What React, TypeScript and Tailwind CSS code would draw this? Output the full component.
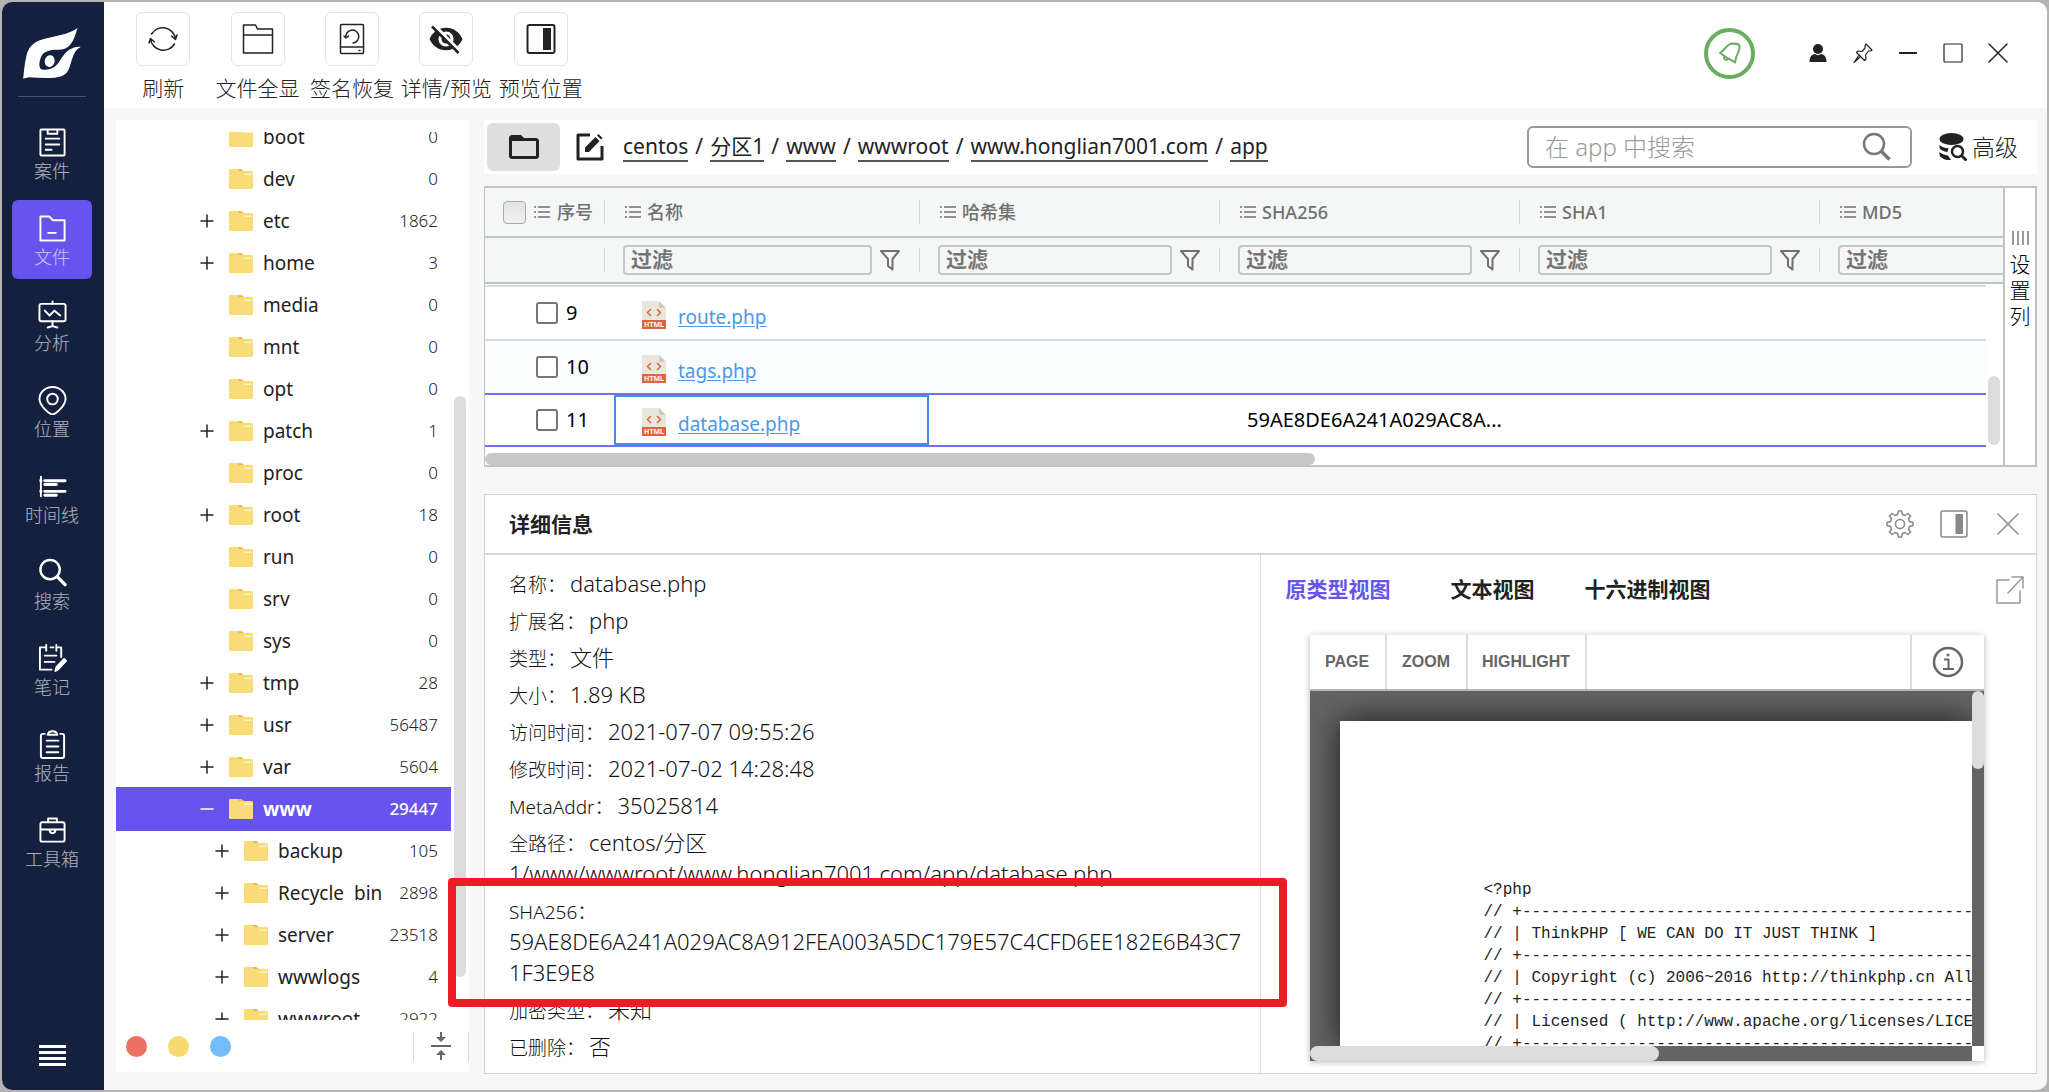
import type { ReactNode } from "react";
import { MdFolderOpen, MdVisibilityOff } from "react-icons/md";

const treeRows = [
  { name: "boot", count: 0 },
  { name: "dev", count: 0 },
  { name: "etc", count: 1862, toggle: "+" },
  { name: "home", count: 3, toggle: "+" },
  { name: "media", count: 0 },
  { name: "mnt", count: 0 },
  { name: "opt", count: 0 },
  { name: "patch", count: 1, toggle: "+" },
  { name: "proc", count: 0 },
  { name: "root", count: 18, toggle: "+" },
  { name: "run", count: 0 },
  { name: "srv", count: 0 },
  { name: "sys", count: 0 },
  { name: "tmp", count: 28, toggle: "+" },
  { name: "usr", count: 56487, toggle: "+" },
  { name: "var", count: 5604, toggle: "+" },
  { name: "www", count: 29447, toggle: "-", active: true },
  { name: "backup", count: 105, toggle: "+", nested: true },
  { name: "Recycle\u00a0 bin", count: 2898, toggle: "+", nested: true },
  { name: "server", count: 23518, toggle: "+", nested: true },
  { name: "wwwlogs", count: 4, toggle: "+", nested: true },
  { name: "wwwroot", count: 2922, toggle: "+", nested: true },
];

const crumbs = ["centos", "分区1", "www", "wwwroot", "www.honglian7001.com", "app"];

const columns = ["名称", "哈希集", "SHA256", "SHA1", "MD5"];

const files = [
  { id: 9, name: "route.php", sha256: "" },
  { id: 10, name: "tags.php", sha256: "" },
  { id: 11, name: "database.php", sha256: "59AE8DE6A241A029AC8A...", selected: true },
];

const details = [
  { label: "名称", value: "database.php" },
  { label: "扩展名", value: "php" },
  { label: "类型", value: "文件" },
  { label: "大小", value: "1.89 KB" },
  { label: "访问时间", value: "2021-07-07 09:55:26" },
  { label: "修改时间", value: "2021-07-02 14:28:48" },
  { label: "MetaAddr", value: "35025814" },
  { label: "全路径", value: "centos/分区\n1/www/wwwroot/www.honglian7001.com/app/database.php" },
  {
    label: "SHA256",
    value: "\n59AE8DE6A241A029AC8A912FEA003A5DC179E57C4CFD6EE182E6B43C7\n1F3E9E8",
    marked: true,
  },
  { label: "加密类型", value: "未知" },
  { label: "已删除", value: "否" },
];

const dashes = "// +" + "-".repeat(70);
const code = [
  "<?php",
  dashes,
  "// | ThinkPHP [ WE CAN DO IT JUST THINK ]",
  dashes,
  "// | Copyright (c) 2006~2016 http://thinkphp.cn All rights reserved.",
  dashes,
  "// | Licensed ( http://www.apache.org/licenses/LICENSE-2.0 )",
  dashes,
].join("\n");

type IconProps = { className?: string; children: ReactNode; box?: string };

const Icon = ({ className, children, box = "0 0 30 30" }: IconProps) => (
  <svg
    viewBox={box}
    className={className}
    fill="none"
    stroke="currentColor"
    strokeWidth={2}
    strokeLinecap="round"
    strokeLinejoin="round"
    aria-hidden="true"
  >
    {children}
  </svg>
);

const navItems = [
  {
    label: "案件",
    icon: (
      <>
        <rect x="2.5" y="1.5" width="25" height="27" rx="1" />
        <path d="M10 2v4h10V2M8 11h14M8 17h14M8 22.5h6" />
      </>
    ),
  },
  {
    label: "文件",
    active: true,
    icon: <path d="M2.5 2.5h9l4 4h12v21h-25zM10.500 19.500h8" />,
  },
  {
    label: "分析",
    icon: (
      <>
        <rect x="1.500" y="4" width="27" height="18" rx="2" />
        <path d="M15 1.500V4M15 22v5M10 28.500l5-1.500 5 1.500M7 11l5 5 5-5 6 5" />
      </>
    ),
  },
  {
    label: "位置",
    icon: (
      <>
        <path d="M15 29.500C11 29 1.500 20 1.500 13.500a13.500 12.500 0 0 1 27 0C28.500 20 19 29 15 29.500z" />
        <circle cx="15" cy="13.500" r="5.500" />
      </>
    ),
  },
  {
    label: "时间线",
    icon: (
      <>
        <path d="M3 5v20" />
        <path strokeWidth="3" d="M3 8.500v1M3 19.500v1M7 9h21M7 13h12M7 20h21M7 24h12" />
      </>
    ),
  },
  {
    label: "搜索",
    icon: (
      <>
        <circle cx="12.500" cy="12" r="10" strokeWidth="2.500" />
        <path d="M20 19.500l8 8" strokeWidth="3.500" />
      </>
    ),
  },
  {
    label: "笔记",
    icon: (
      <>
        <path d="M7 3.500H2v23h12M13 3.500h3M21 3.500h3v10M8.500 1v6M19 1v6M7 12h12M7 18.500h10" />
        <path d="M18 28l1-4 8-8.500 2 2-8 8.500z" fill="currentColor" />
      </>
    ),
  },
  {
    label: "报告",
    icon: (
      <>
        <path d="M7 4H5a2 2 0 0 0-2 2v21a2 2 0 0 0 2 2h20a2 2 0 0 0 2-2V6a2 2 0 0 0-2-2h-2" />
        <path d="M10 5c1-5 9-5 10 0zM9 11h12M9 17h12M9 23h12" />
      </>
    ),
  },
  {
    label: "工具箱",
    icon: (
      <>
        <rect x="2.500" y="6.500" width="25" height="20" rx="2" />
        <path d="M10.500 6V2.500h9V6M3 14h24M12 14c0 5 6 5 6 0" />
      </>
    ),
  },
];

const toolItems = [
  {
    label: "刷新",
    icon: (
      <Icon className="size-8" box="0 0 32 32">
        <path
          strokeWidth="1.500"
          d="M4.500 11a13 13 0 0 1 24 5M27.500 21a13 13 0 0 1-24-5M24.500 13l4 3.500 1.500-4.500M7.500 19l-4-3.500L2 20"
        />
      </Icon>
    ),
  },
  {
    label: "文件全显",
    icon: (
      <Icon className="size-8" box="0 0 32 32">
        <path strokeWidth="1.500" d="M1.500 2h12l2 4h15v24h-29zM1.500 12h29" />
      </Icon>
    ),
  },
  {
    label: "签名恢复",
    icon: (
      <Icon className="size-8" box="0 0 32 32">
        <rect x="4.500" y="1.500" width="23" height="29" rx="1" strokeWidth="1.500" />
        <path strokeWidth="1.500" d="M4.500 24h23M23 27.500h1M8 13l2 2 2.500-2M10 15a6.500 6.500 0 1 1 7 5" />
      </Icon>
    ),
  },
  { label: "详情/预览", icon: <MdVisibilityOff className="size-9" /> },
  {
    label: "预览位置",
    icon: (
      <Icon className="size-8" box="0 0 32 32">
        <rect x="2.500" y="2" width="27" height="28" rx="2" />
        <path d="M18 5h8v22h-8z" fill="currentColor" stroke="none" />
      </Icon>
    ),
  },
];

const FolderIcon = () => (
  <svg viewBox="0 0 24 20" className="h-5 w-6 shrink-0" aria-hidden="true">
    <path d="M1 0h11l3 2h8a1 1 0 0 1 1 1v16a1 1 0 0 1-1 1H1a1 1 0 0 1-1-1V1a1 1 0 0 1 1-1z" fill="#f9db78" />
    <path d="M9 0h3l3 2h-5z" fill="#efb45a" />
    <path d="M15 4.500h8v1.500h-8z" fill="#fff3c9" />
  </svg>
);

const HtmlIcon = () => (
  <svg viewBox="0 0 24 28" className="h-7 w-6 shrink-0" aria-hidden="true">
    <path d="M0 0h17l7 7v21H0z" fill="#e9e7dc" />
    <path d="M17 0l7 7h-7z" fill="#cfccbd" />
    <path d="M9 8l-3.500 3.500L9 15M15 8l3.500 3.500L15 15" fill="none" stroke="#e0673a" strokeWidth="1.500" />
    <path d="M0 19h24v9H0z" fill="#e0623a" />
    <text x="12" y="26" textAnchor="middle" fontSize="7" fontWeight="700" fill="#fff">
      HTML
    </text>
  </svg>
);

const ListIcon = () => (
  <Icon className="h-4 w-4 shrink-0" box="0 0 16 16">
    <path strokeWidth="1.500" strokeLinecap="butt" d="M0 3h2M4 3h12M0 8h2M4 8h12M0 13h2M4 13h12" />
  </Icon>
);

const FunnelIcon = () => (
  <Icon className="h-[22px] w-5 shrink-0" box="0 0 20 22">
    <path d="M1 2h18l-6.500 8v10.500L8 17v-7z" />
  </Icon>
);

const Sidebar = () => (
  <nav className="flex w-[102px] shrink-0 flex-col items-center bg-[#15203f] pl-[10px] pr-3">
    <svg viewBox="60 42 174 154" className="mt-[26px] h-[51px] w-[58px]" fill="#fff" aria-hidden="true">
      <path d="M224 42C200 62 150 66 110 79C86 88 75 105 70 125C64 150 62 175 60 195L76 191C120 194 168 197 188 180C208 164 203 112 234 99C208 97 192 112 182 124C166 144 162 168 120 168C104 168 108 142 115 127C122 113 140 108 165 108C200 108 212 85 224 42z" />
      <ellipse cx="140" cy="142" rx="15" ry="18" transform="rotate(12 140 142)" />
    </svg>
    <hr className="mt-[17px] w-[68px] border-[#46508c]" />
    <ul className="mt-[17px] flex w-full flex-col gap-[7px]">
      {navItems.map((item) => (
        <li key={item.label}>
          <button
            className={
              item.active
                ? "flex h-[79px] w-full flex-col items-center rounded-md bg-[#6754ef] pt-[14px] text-white"
                : "flex h-[79px] w-full flex-col items-center pt-[14px] text-white"
            }
          >
            <Icon className="size-[29px]">{item.icon}</Icon>
            <span className="whitespace-nowrap text-lg font-light leading-7 text-white/65">{item.label}</span>
          </button>
        </li>
      ))}
    </ul>
    <button className="mt-auto mb-6 flex w-[27px] flex-col gap-[3px]" aria-label="菜单">
      <span className="h-[3px] w-full bg-white" />
      <span className="h-[3px] w-full bg-white" />
      <span className="h-[3px] w-full bg-white" />
      <span className="h-[3px] w-full bg-white" />
    </button>
  </nav>
);

const Toolbar = () => (
  <header className="flex h-[106px] shrink-0 justify-between bg-white pl-3 pr-[39px]">
    <div className="grid w-[472px] grid-cols-5 pt-[10px]">
      {toolItems.map((item) => (
        <button key={item.label} className="flex flex-col items-center">
          <span className="flex size-[54px] items-center justify-center rounded-md border border-[#e3e3e3]">
            {item.icon}
          </span>
          <span className="mt-2 whitespace-nowrap text-[21px] font-light leading-7">{item.label}</span>
        </button>
      ))}
    </div>
    <div className="flex h-[102px] items-center gap-[25px]">
      <button
        className="mr-7 flex size-[51px] items-center justify-center rounded-full border-4 border-[#69ae5e] text-[#69ae5e]"
        aria-label="通知"
      >
        <Icon className="size-6" box="0 0 24 24">
          <path d="M2 12c5-3 7-9 12-9.500 4 0 7 0 7.500 2.500 1 5-3 6-4.500 16.500C13 19 9 17 2 12zM6 16c0 2 1 3 3.500 2.500" />
        </Icon>
      </button>
      <button aria-label="用户">
        <svg viewBox="0 0 20 20" className="size-5" fill="currentColor" aria-hidden="true">
          <circle cx="10" cy="6" r="5" />
          <path d="M1.500 19c0-5 2-7.500 5.500-8 2 1.500 4 1.500 6 0 3.500.5 5.500 3 5.500 8z" />
        </svg>
      </button>
      <button aria-label="固定">
        <Icon className="size-5" box="0 0 20 20">
          <path
            strokeWidth="1.200"
            d="M13 1l6 6-1.500 1h-2l-3 4 .5 4-1.500 1.500L3.500 9.500 5 8l4 .5 3-3.500V2.500zM7.500 13.500L1 19.500l5-7.500"
          />
        </Icon>
      </button>
      <button aria-label="最小化">
        <Icon className="size-5" box="0 0 20 20">
          <path d="M1 10h18" strokeLinecap="butt" />
        </Icon>
      </button>
      <button aria-label="最大化">
        <Icon className="size-5" box="0 0 20 20">
          <rect x="1" y="1" width="18" height="18" rx="1" strokeWidth="1.200" />
        </Icon>
      </button>
      <button aria-label="关闭">
        <Icon className="size-5" box="0 0 20 20">
          <path d="M1 1l18 18M19 1L1 19" strokeWidth="1.500" />
        </Icon>
      </button>
    </div>
  </header>
);

const TreePanel = () => (
  <aside className="mb-[2px] flex w-[353px] shrink-0 flex-col bg-white pt-3">
    <div className="flex min-h-0 flex-1 gap-[3px]">
      <ul className="flex-1 overflow-hidden">
        {treeRows.map((row, index) => (
          <li
            key={row.name}
            className={
              (row.active ? "-my-px h-11 bg-[#6754ef] font-bold text-white " : "h-[42px] text-[#222] ") +
              (index === 0 ? "-mt-4 " : "") +
              (row.nested ? "pl-[99px] " : "pl-[84px] ") +
              "flex items-center pr-[13px]"
            }
          >
            <button className="flex h-full w-[14px] items-center justify-center" aria-label={row.name}>
              {row.toggle && (
                <Icon className="size-[14px]" box="0 0 14 14">
                  <path strokeWidth="1.500" d={row.toggle === "+" ? "M1 7h12M7 1v12" : "M1 7h12"} />
                </Icon>
              )}
            </button>
            <span className="ml-[15px] flex flex-1 items-center gap-[10px]">
              <FolderIcon />
              <span className="whitespace-nowrap text-[19px]">{row.name}</span>
            </span>
            <span className={row.active ? "text-[17px] font-medium" : "text-[17px] font-light text-[#222]"}>
              {row.count}
            </span>
          </li>
        ))}
      </ul>
      <div className="w-[15px] pt-[264px]">
        <div className="h-[581px] w-3 rounded-full bg-[#dcdcdc]" />
      </div>
    </div>
    <div className="flex h-[52px] items-center pl-[10px]">
      <button className="size-[21px] rounded-full bg-[#ec7063]" aria-label="红色标记" />
      <button className="ml-[21px] size-[21px] rounded-full bg-[#f9d96b]" aria-label="黄色标记" />
      <button className="ml-[21px] size-[21px] rounded-full bg-[#74bbf7]" aria-label="蓝色标记" />
      <button
        className="ml-auto flex h-[29px] w-14 items-center justify-center border-x border-[#d8d8d8] text-[#666]"
        aria-label="折叠"
      >
        <svg viewBox="0 0 20 28" className="h-7 w-5" fill="currentColor" aria-hidden="true">
          <path d="M0 13h20v2H0zM9 0h2v5h4l-5 5-5-5h4zM9 28h2v-5h4l-5-5-5 5h4z" />
        </svg>
      </button>
    </div>
  </aside>
);

const PathBar = () => (
  <div className="flex h-[54px] shrink-0 items-center bg-white pl-[3px] pr-[19px]">
    <button className="flex h-12 w-[73px] items-center justify-center rounded-md bg-[#dfdfdf]" aria-label="目录">
      <MdFolderOpen className="size-9" />
    </button>
    <button className="ml-[15px]" aria-label="编辑路径">
      <Icon className="size-[30px]">
        <path strokeWidth="3" strokeLinecap="butt" d="M15 3H3v24h24V14" />
        <path fill="currentColor" stroke="none" d="M10 20v-4.500L20.500 5l4 4L14 20zM22 3.500l1.500-1.500 4 4L26 7.500z" />
      </Icon>
    </button>
    <div className="ml-[18px] flex text-[21px] leading-7">
      {crumbs.map((crumb, index) => (
        <span key={crumb} className="flex">
          {index > 0 && <span className="w-[22px] text-center">/</span>}
          <a href="#" className="border-b-2 border-[#555]">
            {crumb}
          </a>
        </span>
      ))}
    </div>
    <label className="ml-auto flex h-[42px] w-[385px] items-center rounded-md border-2 border-[#999] pl-4 pr-[18px] text-[#777]">
      <input
        aria-label="搜索"
        className="min-w-0 flex-1 text-2xl font-light outline-none placeholder:text-[#999]"
        placeholder="在 app 中搜索"
      />
      <Icon className="size-[30px]">
        <circle cx="12" cy="12" r="10" strokeWidth="2.500" />
        <path d="M19.500 19.500l8 8" strokeWidth="3.500" strokeLinecap="butt" />
      </Icon>
    </label>
    <button className="ml-[27px] flex items-center gap-[5px] text-[23px] font-light">
      <svg viewBox="0 0 28 28" className="size-7" aria-hidden="true">
        <g fill="currentColor">
          <ellipse cx="12.500" cy="6" rx="12" ry="6" />
          <path d="M.5 12c2 2 5 3 9 3.200L8.500 19c-4-.5-7-2-8-4zM.5 19c2 2 5 3 8.500 3.500l3 4.500C6 27.500 1.500 25 .5 22z" />
        </g>
        <circle cx="18.500" cy="18.500" r="5.500" fill="none" stroke="currentColor" strokeWidth="2.500" />
        <path d="M22.500 22.500l5 5" stroke="currentColor" strokeWidth="3" />
      </svg>
      高级
    </button>
  </div>
);

const FileTable = () => (
  <section className="flex h-[281px] shrink-0 border-2 border-l border-[#bdc3c7] bg-white">
    <div className="flex min-w-0 flex-1 flex-col overflow-hidden">
      <div className="shrink-0 overflow-hidden bg-[#f5f6f6] text-[#707070]">
        <table className="w-[1635px] table-fixed border-separate border-spacing-0">
          <colgroup>
            <col className="w-[120px]" />
            <col className="w-[315px]" />
            <col />
            <col />
            <col />
            <col />
          </colgroup>
          <thead>
            <tr className="text-lg font-medium">
              <th className="h-[50px] border-b-2 border-[#bdc3c7] p-0">
                <div className="flex items-center pl-[18px]">
                  <input
                    type="checkbox"
                    aria-label="全选"
                    className="size-[23px] appearance-none rounded-[4px] border border-[#aaa] bg-linear-to-b from-[#e2e2e2] to-[#f2f2f2]"
                  />
                  <span className="ml-2">
                    <ListIcon />
                  </span>
                  <span className="ml-[7px] font-medium">序号</span>
                  <span className="ml-auto h-6 w-px bg-[#d3d6d8]" />
                </div>
              </th>
              {columns.map((column) => (
                <th key={column} className="h-[50px] border-b-2 border-[#bdc3c7] p-0">
                  <div className="flex items-center pl-5">
                    <ListIcon />
                    <span className="ml-[6px] font-medium">{column}</span>
                    <span className="ml-auto h-6 w-px bg-[#d3d6d8]" />
                  </div>
                </th>
              ))}
            </tr>
            <tr>
              <td className="h-[46px] border-b-2 border-[#bdc3c7] p-0">
                <div className="flex">
                  <span className="ml-auto h-6 w-px bg-[#d3d6d8]" />
                </div>
              </td>
              {columns.map((column) => (
                <td key={column} className="h-[46px] border-b-2 border-[#bdc3c7] p-0">
                  <div className="flex items-center pl-[18px]">
                    <input
                      aria-label={column + "过滤"}
                      placeholder="过滤"
                      className="h-[30px] min-w-0 flex-1 rounded-[4px] border-2 border-[#c4c6c7] pl-[6px] text-[21px] font-bold outline-none placeholder:text-[#757575]"
                    />
                    <button className="ml-2" aria-label="筛选">
                      <FunnelIcon />
                    </button>
                    <span className="ml-[19px] h-6 w-px bg-[#d3d6d8]" />
                  </div>
                </td>
              ))}
            </tr>
          </thead>
        </table>
      </div>
      <div className="mt-px flex min-h-0 flex-1 gap-[2px]">
        <div className="flex-1 overflow-hidden">
          <table className="w-full table-fixed border-separate border-spacing-0 text-xl text-black">
            <colgroup>
              <col className="w-[129px]" />
              <col className="w-[315px]" />
              <col className="w-[300px]" />
              <col className="w-[300px]" />
              <col />
            </colgroup>
            <tbody>
              {files.map((file) => {
                const cell = file.selected
                  ? "h-[54px] border-y-2 border-[#7070f2] p-0"
                  : "h-[54px] border-t-2 border-[#d8dbdd] p-0";
                return (
                  <tr key={file.id} className={file.id % 2 === 0 ? "bg-[#fcfdfe]" : "bg-white"}>
                    <td className={cell}>
                      <label className="flex items-center gap-2 pl-[51px]">
                        <input
                          type="checkbox"
                          className="size-[22px] appearance-none rounded-[3px] border-2 border-[#777] bg-white"
                        />
                        {file.id}
                      </label>
                    </td>
                    <td className={cell}>
                      <div
                        className={
                          file.selected
                            ? "flex h-[50px] items-center gap-3 border-2 border-[#3f8fe5] pl-[26px] pt-1"
                            : "flex items-center gap-3 pl-7 pt-1"
                        }
                      >
                        <HtmlIcon />
                        <a href="#" className="pt-1 text-[19px] text-[#4a98ea] underline underline-offset-2">
                          {file.name}
                        </a>
                      </div>
                    </td>
                    <td className={cell} />
                    <td className={cell + " pl-[18px]"}>{file.sha256}</td>
                    <td className={cell} />
                  </tr>
                );
              })}
            </tbody>
          </table>
        </div>
        <div className="flex w-[15px] flex-col justify-end pb-2">
          <div className="h-[69px] w-3 rounded-full bg-[#dcdcdc]" />
        </div>
      </div>
      <div className="mt-auto h-3 w-[830px] shrink-0 rounded-full bg-[#c9c9c9]" />
    </div>
    <button className="flex w-8 shrink-0 flex-col items-center border-l-2 border-[#bdc3c7] pt-[43px] text-[21px] font-light leading-[26px] text-black">
      <span className="mb-[6px] flex h-[14px] gap-[3px]">
        <span className="w-[2px] bg-[#999]" />
        <span className="w-[2px] bg-[#999]" />
        <span className="w-[2px] bg-[#999]" />
        <span className="w-[2px] bg-[#999]" />
      </span>
      <span>设</span>
      <span>置</span>
      <span>列</span>
    </button>
  </section>
);

const Preview = () => (
  <div className="flex min-w-0 flex-1 flex-col pb-3">
    <div className="flex h-[70px] items-center pl-[25px] pr-3 text-[21px] font-bold">
      <button className="text-[#6754ef]">原类型视图</button>
      <button className="ml-[60px]">文本视图</button>
      <button className="ml-[50px]">十六进制视图</button>
      <button className="ml-auto text-[#999]" aria-label="新窗口打开">
        <Icon className="size-7" box="0 0 28 28">
          <path strokeWidth="1.500" d="M13 4H1v23h23V15M16 1h11v11M27 1L12 17" />
        </Icon>
      </button>
    </div>
    <div className="ml-[49px] mr-[52px] mt-[10px] flex min-h-0 flex-1 flex-col shadow-[0_1px_6px_rgba(0,0,0,0.3)]">
      <div className="flex h-[56px] shrink-0 border-b-2 border-[#b5b5b5] font-['Liberation_Sans',Arial,sans-serif] text-base font-bold text-[#666]">
        <button className="w-[77px] border-r-2 border-[#ddd]">PAGE</button>
        <button className="w-[81px] border-r-2 border-[#ddd]">ZOOM</button>
        <button className="w-[119px] border-r-2 border-[#ddd]">HIGHLIGHT</button>
        <button className="ml-auto flex w-[74px] items-center justify-center border-l-2 border-[#ddd]" aria-label="信息">
          <Icon className="size-8" box="0 0 32 32">
            <circle cx="16" cy="16" r="14" strokeWidth="2.500" />
            <path strokeWidth="2" strokeLinecap="butt" d="M12 13.500h4.500V23M11 23h11" />
            <circle cx="16" cy="9" r="1.500" fill="currentColor" stroke="none" />
          </Icon>
        </button>
      </div>
      <div className="flex min-h-0 flex-1">
        <div className="min-w-0 flex-1 overflow-hidden bg-[#646464] pl-[30px] pt-[30px]">
          <div className="h-full bg-white pl-[144px] pt-[158px] shadow-[0_0_30px_rgba(0,0,0,0.75)]">
            <pre className="font-['Liberation_Mono','Courier_New',monospace] text-base leading-[22px] text-[#222]">
              {code}
            </pre>
          </div>
        </div>
        <div className="w-3 bg-[#646464]">
          <div className="h-[78px] rounded-full bg-[#dcdcdc]" />
        </div>
      </div>
      <div className="flex h-[15px] shrink-0">
        <div className="flex-1 bg-[#646464]">
          <div className="h-full w-[349px] rounded-full bg-[#dcdcdc]" />
        </div>
        <div className="w-3 bg-white" />
      </div>
    </div>
  </div>
);

const DetailPanel = () => (
  <section className="mt-[27px] flex min-h-0 flex-1 flex-col border border-[#d2d2d2] bg-white">
    <div className="flex h-[60px] shrink-0 items-center border-b-2 border-[#d8d8d8] pl-6 pr-[14px]">
      <h2 className="pt-[2px] text-[21px] font-bold">详细信息</h2>
      <div className="ml-auto flex gap-[26px] text-[#888]">
        <button aria-label="设置">
          <Icon className="size-7" box="0 0 28 28">
            <circle cx="14" cy="14" r="4.500" strokeWidth="1.500" />
            <path
              strokeWidth="1.500"
              d="M11.500 4.500L12.500 1h3l1 3.500 2.500 1 3-2 2.500 2.500-2 3 1 2.500 3.500 1v3l-3.500 1-1 2.500 2 3-2.500 2.500-3-2-2.500 1-1 3.500h-3l-1-3.500-2.500-1-3 2L3.500 22l2-3-1-2.500-3.500-1v-3l3.500-1 1-2.500-2-3L6 3.500l3 2z"
            />
          </Icon>
        </button>
        <button aria-label="停靠位置">
          <Icon className="size-7" box="0 0 28 28">
            <rect x="1" y="1" width="26" height="26" rx="2" strokeWidth="1.500" />
            <path d="M15.500 4h7.500v20h-7.500z" fill="currentColor" stroke="none" />
          </Icon>
        </button>
        <button aria-label="关闭详情">
          <Icon className="size-7" box="0 0 28 28">
            <path d="M4 4l20 20M24 4L4 24" strokeWidth="1.500" />
          </Icon>
        </button>
      </div>
    </div>
    <div className="flex min-h-0 flex-1">
      <dl className="w-1/2 border-r border-[#d8d8d8] pl-6 pt-[14px] text-[#111]">
        {details.map((item) => (
          <div key={item.label} className="relative mb-[6px] whitespace-pre leading-[28px]">
            <dt className="inline text-[19px] font-light">{item.label}：</dt>
            <dd className="ml-1 inline text-[22px] font-light">{item.value}</dd>
            {item.marked && (
              <div className="absolute -bottom-[18px] -left-[61px] -right-[27px] -top-[18px] z-10 rounded-[4px] border-8 border-[#ed1c24]" />
            )}
          </div>
        ))}
      </dl>
      <Preview />
    </div>
  </section>
);

const App = () => {
  return (
    <div className="h-screen bg-[#b3b3b1] p-[2px] font-['Noto_Sans','Noto_Sans_CJK_SC',sans-serif] text-[#222]">
      <div className="flex h-full overflow-hidden rounded-[10px] bg-[#f7f7f7]">
        <Sidebar />
        <div className="flex min-w-0 flex-1 flex-col">
          <Toolbar />
          <main className="flex min-h-0 flex-1 gap-[15px] pb-4 pl-3 pr-[10px] pt-3">
            <TreePanel />
            <div className="flex min-w-0 flex-1 flex-col">
              <PathBar />
              <div className="h-3 shrink-0" />
              <FileTable />
              <DetailPanel />
            </div>
          </main>
        </div>
      </div>
    </div>
  );
};

export default App;
